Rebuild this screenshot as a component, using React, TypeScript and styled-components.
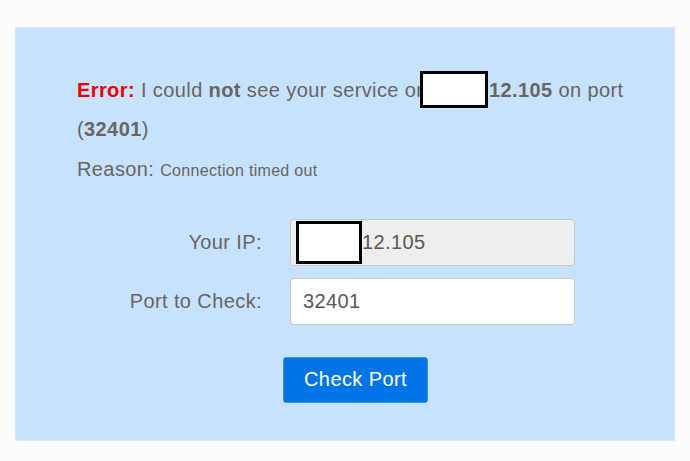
import React from "react";
import styled, { createGlobalStyle } from "styled-components";

const Global = createGlobalStyle`
  html, body { margin: 0; padding: 0; background: #fcfcfc; }
  body { font-family: "Liberation Sans", Arial, sans-serif; }
`;

const Page = styled.div`
  padding: 27px 15px 20px 15px;
`;

const Panel = styled.div`
  background: #c6e2ff;
  box-shadow: inset 0 0 0 1px #d4e9ff;
  padding: 44px 41px 38px 62px;
  color: #686562;
  font-size: 20px;
  letter-spacing: 0.4px;
`;

const Message = styled.p`
  margin: 0;
  line-height: 39.4px;
`;

const ErrorLabel = styled.b`
  color: #f00000;
`;

const Redacted = styled.span<{ $w: number; $h: number }>`
  display: inline-block;
  box-sizing: border-box;
  width: ${(p) => p.$w}px;
  height: ${(p) => p.$h}px;
  background: #ffffff;
  border: 3px solid #000;
  vertical-align: top;
`;

const InlineRedacted = styled(Redacted)`
  margin-left: -8px;
  margin-right: 1px;
`;

const Reason = styled.p`
  margin: 5px 0 0 0;
  line-height: 28px;
`;

const Small = styled.span`
  font-size: 16px;
  letter-spacing: 0.3px;
`;

const Form = styled.div`
  margin-top: 34px;
  display: grid;
  grid-template-columns: 185px 285px;
  column-gap: 28px;
  row-gap: 12px;
  align-items: center;
`;

const Label = styled.label`
  text-align: right;
  font-size: 20px;
  color: #686562;
`;

const Field = styled.div<{ $readonly?: boolean }>`
  box-sizing: border-box;
  height: 47px;
  display: flex;
  align-items: center;
  padding: 0 12px;
  font-size: 20px;
  color: #5a5754;
  background: ${(p) => (p.$readonly ? "#eeeeee" : "#ffffff")};
  border: 1px solid #c8c8c8;
  border-radius: 4px;
`;

const ReadonlyField = styled(Field)`
  padding: 0 0 0 5px;
`;

const Actions = styled.div`
  margin-top: 32px;
  display: flex;
  justify-content: center;
`;

const Button = styled.button`
  height: 46px;
  padding: 0 20px;
  font-family: "Liberation Sans", Arial, sans-serif;
  font-size: 20px;
  letter-spacing: 0.4px;
  color: #ffffff;
  background: #0275e6;
  border: 1px solid #3f93ee;
  border-radius: 3px;
  cursor: pointer;
`;

export default function App() {
  return (
    <>
      <Global />
      <Page>
        <Panel>
          <Message>
            <ErrorLabel>Error:</ErrorLabel> I could <b>not</b> see your service on
            <InlineRedacted $w={68} $h={37} />
            <b>12.105</b> on port (<b>32401</b>)
          </Message>
          <Reason>
            Reason: <Small>Connection timed out</Small>
          </Reason>
          <Form>
            <Label>Your IP:</Label>
            <ReadonlyField $readonly>
              <Redacted $w={66} $h={43} />
              12.105
            </ReadonlyField>
            <Label>Port to Check:</Label>
            <Field>32401</Field>
          </Form>
          <Actions>
            <Button>Check Port</Button>
          </Actions>
        </Panel>
      </Page>
    </>
  );
}
